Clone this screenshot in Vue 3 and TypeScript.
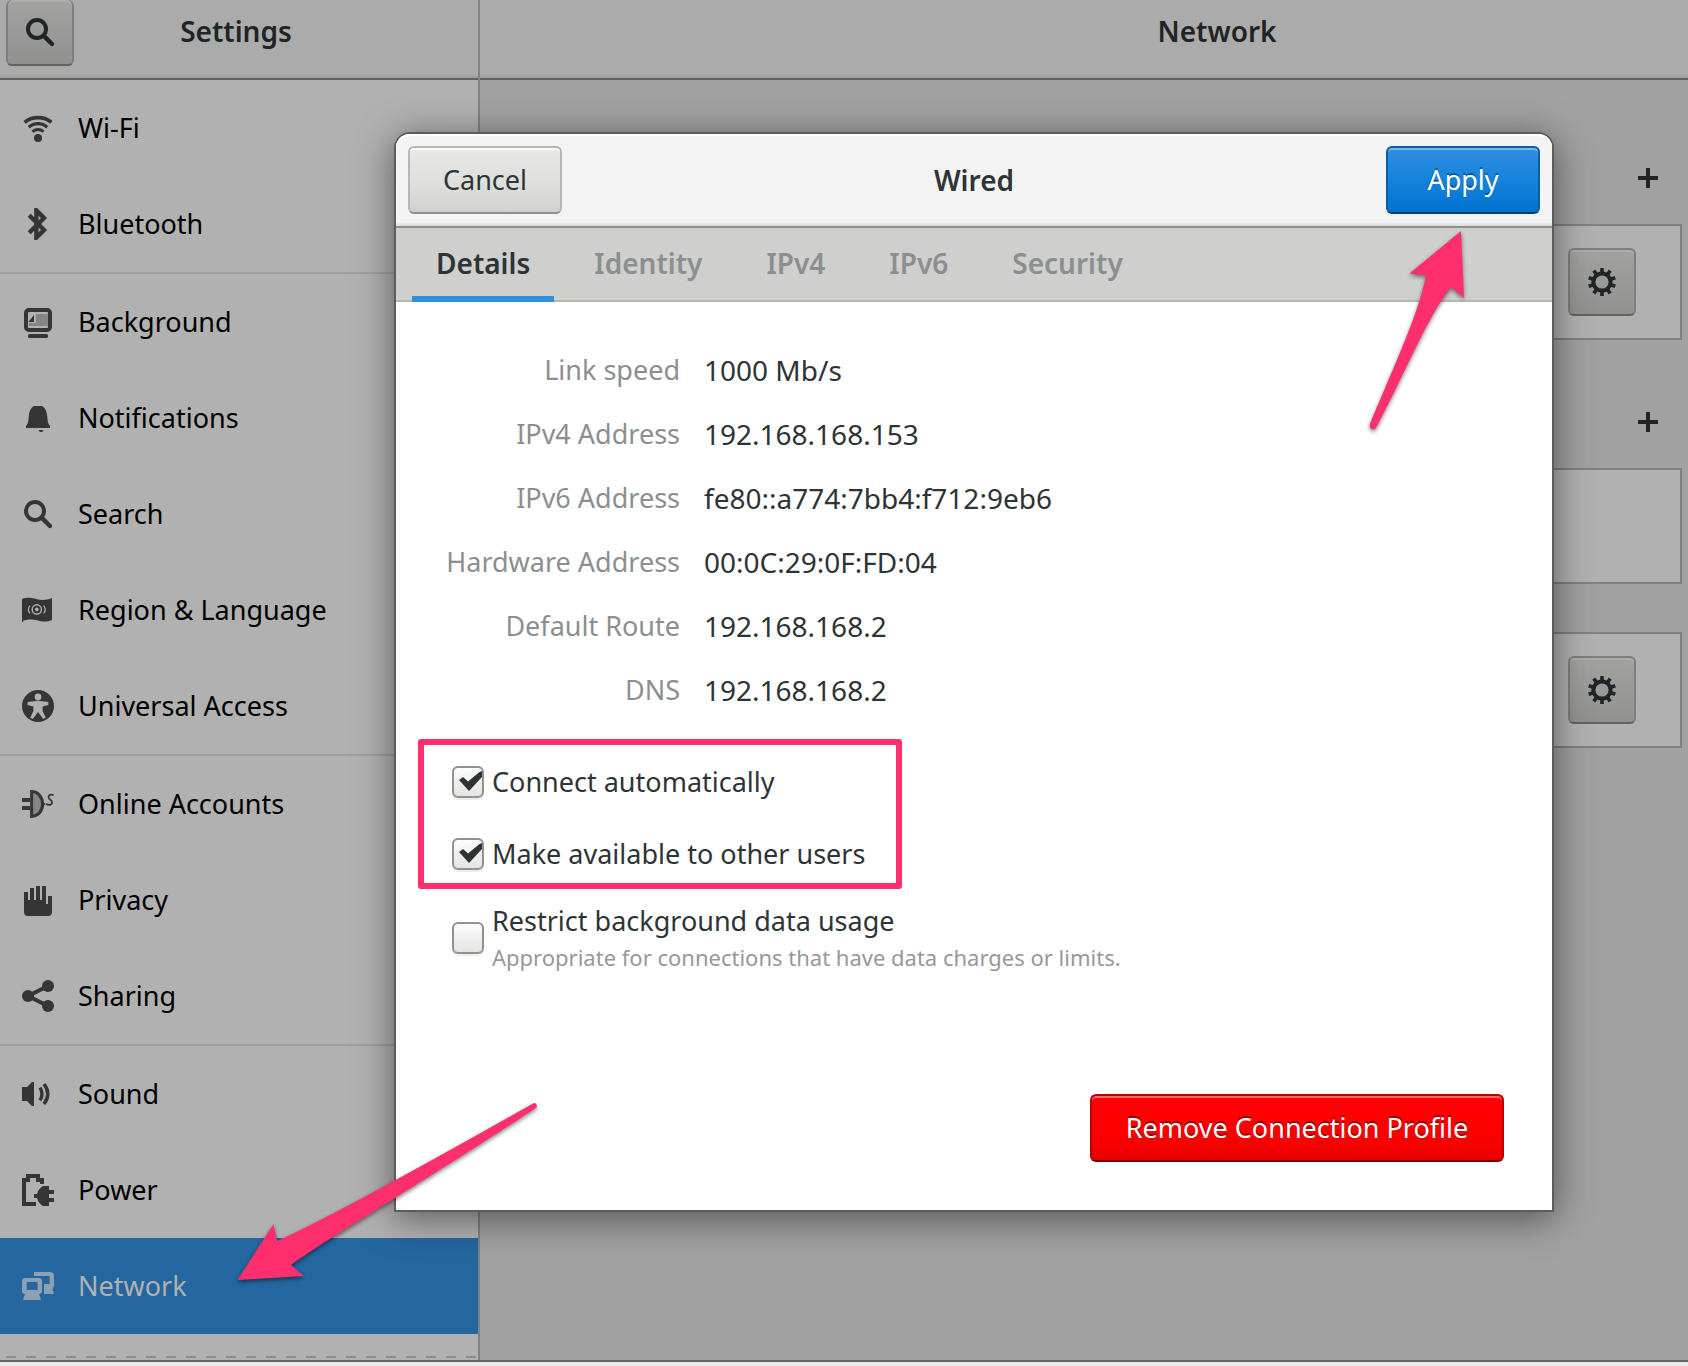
<script setup lang="ts">
import { ref } from 'vue'

interface Item {
  id: string
  label: string
}

const groups: Item[][] = [
  [
    { id: 'wifi', label: 'Wi-Fi' },
    { id: 'bluetooth', label: 'Bluetooth' },
  ],
  [
    { id: 'background', label: 'Background' },
    { id: 'bell', label: 'Notifications' },
    { id: 'search', label: 'Search' },
    { id: 'region', label: 'Region & Language' },
    { id: 'access', label: 'Universal Access' },
  ],
  [
    { id: 'online', label: 'Online Accounts' },
    { id: 'privacy', label: 'Privacy' },
    { id: 'sharing', label: 'Sharing' },
  ],
  [
    { id: 'sound', label: 'Sound' },
    { id: 'power', label: 'Power' },
    { id: 'network', label: 'Network' },
  ],
]
const current = ref('network')

const tabs = ['Details', 'Identity', 'IPv4', 'IPv6', 'Security']
const activeTab = ref('Details')

const details = [
  { name: 'Link speed', value: '1000 Mb/s' },
  { name: 'IPv4 Address', value: '192.168.168.153' },
  { name: 'IPv6 Address', value: 'fe80::a774:7bb4:f712:9eb6' },
  { name: 'Hardware Address', value: '00:0C:29:0F:FD:04' },
  { name: 'Default Route', value: '192.168.168.2' },
  { name: 'DNS', value: '192.168.168.2' },
]

const options = ref([
  { id: 'auto', label: 'Connect automatically', hint: '', checked: true },
  { id: 'shared', label: 'Make available to other users', hint: '', checked: true },
  {
    id: 'metered',
    label: 'Restrict background data usage',
    hint: 'Appropriate for connections that have data charges or limits.',
    checked: false,
  },
])

const cards = [
  { id: 'wired', add: true, gear: true },
  { id: 'vpn', add: true, gear: false },
  { id: 'proxy', add: false, gear: true },
]

const teeth = [0, 36, 72, 108, 144, 180, 216, 252, 288, 324]
</script>

<template>
  <div class="window">
    <aside class="sidebar">
      <header class="bar side-bar">
        <button class="btn dim search" type="button" aria-label="Search">
          <svg class="icon" viewBox="0 0 16 16" fill="none" stroke="currentColor" stroke-width="2">
            <circle cx="6.5" cy="6.5" r="4.5" />
            <path d="M9.8 9.8 14 14" stroke-width="2.2" stroke-linecap="round" />
          </svg>
        </button>
        <h1>Settings</h1>
      </header>
      <nav>
        <ul v-for="(group, g) in groups" :key="g">
          <li v-for="item in group" :key="item.id">
            <a href="#" :class="{ selected: item.id === current }" @click.prevent="current = item.id">
              <svg class="icon" viewBox="0 0 16 16" fill="currentColor" aria-hidden="true">
                <g v-if="item.id === 'wifi'">
                  <g fill="none" stroke="currentColor">
                    <path d="M1.3 5.2C4.8 2 11.2 2 14.7 5.2" stroke-width="1.8" />
                    <path d="M3.4 7.600C6 5.200 10 5.200 12.600 7.600" stroke-width="1.6" />
                    <path d="M5.2 9.800C7 8.500 9 8.500 10.800 9.800" stroke-width="1.5" />
                  </g>
                  <circle cx="8" cy="13" r="2" />
                </g>
                <path v-else-if="item.id === 'bluetooth'" d="M3.600 3.600 11 11 7.200 14.800V1.200L11 5 3.600 12.400" fill="none" stroke="currentColor" stroke-width="2.2" />
                <g v-else-if="item.id === 'background'">
                  <rect x="2" y="2" width="12" height="10" rx="1.4" fill="none" stroke="currentColor" stroke-width="2" />
                  <path d="M7 4h6v6H3.500V8.500H7z" fill="#858585" />
                  <path d="M6 4.500V8H3.200z" />
                  <rect x="3" y="14" width="10" height="2" rx=".8" />
                </g>
                <g v-else-if="item.id === 'bell'">
                  <path d="M6 2h4c2 1 2.500 3.500 2.700 6 .1 2 .5 3 1.300 4v1H2v-1c.8-1 1.200-2 1.300-4C3.500 5.500 4 3 6 2z" />
                  <path d="M8.300 14h2.400l-.6 1H8.900z" />
                </g>
                <g v-else-if="item.id === 'search'" fill="none" stroke="currentColor" stroke-width="2">
                  <circle cx="6.5" cy="6.5" r="4.5" />
                  <path d="M9.800 9.800 14 14" stroke-width="2.2" stroke-linecap="round" />
                </g>
                <g v-else-if="item.id === 'region'">
                  <path d="M0 2.500C3 1.500 5 2 7.500 2.600 10 3.200 12 3.200 15 2v11c-3 1.200-5 .8-7.500.1C5 12.400 3 12.700.6 13.300V14H0z" />
                  <circle cx="7.4" cy="7.700" r="2.300" fill="none" stroke="#b1b1b1" stroke-width=".7" />
                  <circle cx="7.400" cy="7.700" r=".9" fill="#b1b1b1" />
                  <path d="M4 5.800C3 7 3 8.500 4 9.700M10.800 5.800c1 1.200 1 2.700 0 3.900" fill="none" stroke="#b1b1b1" stroke-width=".6" />
                </g>
                <g v-else-if="item.id === 'access'">
                  <circle cx="8" cy="8" r="8" />
                  <circle cx="8" cy="3.500" r="1.700" fill="#b1b1b1" />
                  <path d="M2.800 6 7 5.500h2l4.200.5v1.500L10.300 8.200v2.300l1.600 3.400-1.300.6L8 11l-2.600 3.500-1.300-.6 1.600-3.400V8.200L2.800 7.500z" fill="#b1b1b1" />
                </g>
                <g v-else-if="item.id === 'online'">
                  <path d="M0 5h4v2H0zM0 9h4v2H0z" />
                  <path d="M4.800 1.800C8 1.800 10.300 4.500 10.300 8S8 14.200 4.800 14.200z" fill="#858585" stroke="currentColor" stroke-width="1.500" />
                  <path d="M10.500 8h1M15.800 3.600c-1.600-.6-2.800 0-2.500 1.200.2 1 1.700 1 1.700 2.300 0 1.500-1.600 1.700-3 .9" fill="none" stroke="currentColor" stroke-width=".9" />
                </g>
                <path v-else-if="item.id === 'privacy'" d="M1 4h2v4h1V2h2v6h1V1h2v7h1V1h2v9h1V6h2v8q0 2-2 2H3q-2 0-2-2z" />
                <g v-else-if="item.id === 'sharing'">
                  <circle cx="3" cy="8" r="3" />
                  <circle cx="13" cy="3" r="3" />
                  <circle cx="13" cy="13" r="3" />
                  <path d="M13 3 3 8l10 5" fill="none" stroke="currentColor" stroke-width="2" />
                </g>
                <g v-else-if="item.id === 'sound'">
                  <path d="M0 4.500h2.500L5 2h1v12H5l-2.500-2.500H0z" />
                  <path d="M9 4.800q2 3.200 0 6.400M11 3q3.800 5 0 10" fill="none" stroke="currentColor" stroke-width="1.700" />
                </g>
                <g v-else-if="item.id === 'power'">
                  <path d="M7 15H1V3h2V1h5v2h2v2" fill="none" stroke="currentColor" stroke-width="2" />
                  <path d="M6 10h1.500c.5-2 1.500-3 3-4H13.500v2H16v2h-2.500v2H16v2h-2.500v2h-3c-1.500-1-2.500-2-3-4H6z" />
                </g>
                <g v-else>
                  <path d="M1.500 4h7q1.500 0 1.500 1.500v5q0 1.500-1.500 1.500l.8 2v1H.7v-1l.8-2Q0 12 0 10.500v-5Q0 4 1.500 4zM2.300 6v4h5.500V6z" fill-rule="evenodd" />
                  <path d="M6 3V1h8q2 0 2 2v5l-.8 2 .6 1v1H11V7h2.800V3z" />
                </g>
              </svg>
              <span>{{ item.label }}</span>
            </a>
          </li>
        </ul>
      </nav>
      <div class="drop-edge"></div>
    </aside>

    <main class="panel">
      <header class="bar panel-bar"><h1>Network</h1></header>
      <div class="sections">
        <section v-for="card in cards" :key="card.id">
          <div v-if="card.add" class="head">
            <button class="add" type="button" aria-label="Add">
              <svg viewBox="0 0 20 20" width="20" height="20"><path d="M8 0h4v8h8v4h-8v8H8v-8H0V8h8z" fill="currentColor" /></svg>
            </button>
          </div>
          <div class="card">
            <button v-if="card.gear" class="btn dim gear" type="button" aria-label="Options">
              <svg class="icon" viewBox="-8 -8 16 16">
                <circle r="4.300" fill="none" stroke="currentColor" stroke-width="2" />
                <rect v-for="t in teeth" :key="t" x="-.9" y="-7" width="1.800" height="2.500" fill="currentColor" :transform="`rotate(${t})`" />
              </svg>
            </button>
          </div>
        </section>
      </div>
    </main>

    <div class="dialog" role="dialog" aria-label="Wired">
      <header class="dialog-bar">
        <button class="btn wide" type="button">Cancel</button>
        <h2>Wired</h2>
        <button class="btn wide apply" type="button">Apply</button>
      </header>
      <div class="tabs" role="tablist">
        <button
          v-for="tab in tabs"
          :key="tab"
          type="button"
          role="tab"
          :aria-selected="tab === activeTab"
          :class="{ active: tab === activeTab }"
          @click="activeTab = tab"
        >{{ tab }}</button>
      </div>
      <div class="body">
        <dl>
          <template v-for="row in details" :key="row.name">
            <dt>{{ row.name }}</dt>
            <dd>{{ row.value }}</dd>
          </template>
        </dl>
        <div class="options">
          <label v-for="option in options" :key="option.id" :for="option.id">
            <span class="check">
              <input :id="option.id" v-model="option.checked" type="checkbox" />
              <svg v-if="option.checked" viewBox="0 0 32 32" aria-hidden="true">
                <path d="M7 14l4-3 5 4.500L27.500 6 30 5v6L17 25z" fill="#2e3436" />
              </svg>
            </span>
            <span class="caption">
              <span>{{ option.label }}</span>
              <small v-if="option.hint">{{ option.hint }}</small>
            </span>
          </label>
        </div>
        <div class="actions">
          <button class="btn remove" type="button">Remove Connection Profile</button>
        </div>
      </div>
      <div class="marker"></div>
      <svg class="arrow arrow-apply" viewBox="0 0 100 204" width="100" height="204" aria-hidden="true">
        <path d="M93 3 41.500 45.500 58 47.500C51 82 36 116 2 196Q1 201 5 201.500 7 201.500 8.500 199C44 131 58 92 83 59L96 70z" />
      </svg>
    </div>

    <svg class="arrow arrow-network" viewBox="0 0 304 184" width="304" height="184" aria-hidden="true">
      <path d="M1.500 180 37.500 124 41 141Q100 115 297 3.500 300 2 301 6 301 7.500 299 8.500C180 87 108 128 55 165L67.500 176z" />
    </svg>
  </div>
</template>

<style>
body {
  margin: 0;
  background: #ebebeb;
}
</style>

<style scoped>
* {
  box-sizing: border-box;
}
.window {
  position: relative;
  display: flex;
  border-bottom: 2px solid #666;
  margin-bottom: 4px;
  background: #a1a1a1;
  color: #1f2526;
  font: 27px/36px "Noto Sans", "Open Sans", sans-serif;
  overflow: hidden;
}
button {
  font: inherit;
  color: inherit;
  padding: 0;
}
h1,
h2 {
  margin: 0;
  font-size: 28px;
  font-weight: 600;
  text-align: center;
}
.icon {
  display: block;
  flex: none;
  width: 32px;
  height: 32px;
}

.sidebar {
  flex: none;
  width: 480px;
  border-right: 2px solid #828282;
  background: #b1b1b1;
}
.bar {
  height: 80px;
  border-bottom: 2px solid #62625d;
  background: linear-gradient(#ababab 74px, #9b9b9a);
}
.bar h1 {
  line-height: 62px;
}
.side-bar {
  display: grid;
  grid-template-columns: 68px 1fr 80px;
  padding-left: 6px;
  align-items: start;
}
.panel-bar {
  padding-left: 266px;
}
.btn {
  display: flex;
  align-items: center;
  justify-content: center;
  height: 68px;
  border: 2px solid #b6b6b3;
  border-bottom-color: #8f8f8a;
  border-radius: 6px;
  background: linear-gradient(#e8e8e7, #dededd 60%, #d0d0ce);
  box-shadow: inset 0 2px #fafafa;
}
.dim {
  width: 68px;
  border-color: #7f7f7d;
  border-bottom-color: #63635f;
  background: linear-gradient(#a2a29f, #989896 60%, #91918f);
  box-shadow: inset 0 2px #adadad;
}
.search {
  height: 66px;
  border-top: 0;
}
ul {
  margin: 0;
  padding: 0;
  list-style: none;
}
ul + ul {
  border-top: 2px solid #9f9f9f;
}
nav a {
  display: flex;
  align-items: center;
  gap: 24px;
  height: 96px;
  padding-left: 22px;
  color: #000;
  text-decoration: none;
}
nav .icon {
  color: #353535;
}
nav a.selected {
  background: #24669f;
  color: #b1b1b1;
}
nav .selected .icon {
  color: #8c9fb3;
}
.drop-edge {
  height: 26px;
  padding-top: 22px;
}
.drop-edge::before {
  content: "";
  display: block;
  height: 2px;
  margin-left: 6px;
  background: repeating-linear-gradient(90deg, #8e8e8e 0 10px, transparent 10px 20px);
}

.panel {
  flex: 1;
}
.sections {
  display: flex;
  flex-direction: column;
  gap: 48px;
  padding: 64px 6px 0 48px;
}
.head {
  display: flex;
  justify-content: flex-end;
  margin-bottom: 12px;
}
.add {
  display: flex;
  align-items: center;
  justify-content: center;
  width: 68px;
  height: 68px;
  border: 0;
  background: none;
}
.card {
  display: flex;
  align-items: center;
  justify-content: flex-end;
  height: 116px;
  padding-right: 44px;
  border: 2px solid #7f7f7f;
  background: #b1b1b1;
}

.dialog {
  position: absolute;
  top: 132px;
  left: 394px;
  right: 134px;
  border: 2px solid #5d5d5d;
  border-radius: 16px 16px 0 0;
  background: #fff;
  color: #2e3436;
  box-shadow: 0 6px 36px rgba(0, 0, 0, 0.5);
}
.dialog-bar {
  display: flex;
  align-items: center;
  justify-content: space-between;
  height: 94px;
  padding: 0 12px;
  border-bottom: 2px solid #8f8f8a;
  border-radius: 14px 14px 0 0;
  background: linear-gradient(#f3f3f3 88px, #dcdcda);
  box-shadow: inset 0 2px #fff;
}
.wide {
  width: 154px;
}
.apply {
  border-color: #0a5da8;
  border-bottom-color: #063e73;
  background: linear-gradient(#2f8fe0, #1583dc 50%, #0073d0);
  box-shadow: inset 0 2px #79b6ec;
  color: #fff;
  text-shadow: 0 -2px rgba(0, 0, 0, 0.35);
}
.tabs {
  display: flex;
  gap: 16px;
  height: 74px;
  padding: 0 16px;
  background: linear-gradient(#cfcfcd 72px, #b6b6b3 72px);
}
.tabs button {
  padding: 2px 24px 0;
  border: 0;
  border-bottom: 6px solid transparent;
  background: none;
  color: #8b8f8f;
  font-size: 28px;
  font-weight: 600;
}
.tabs .active {
  border-color: #2f8fe0;
  color: #2e3436;
}
.body {
  padding: 36px 48px 48px 0;
}
dl {
  display: grid;
  grid-template-columns: 284px 1fr;
  grid-auto-rows: 64px;
  column-gap: 24px;
  align-items: center;
  margin: 0 0 24px;
}
dt {
  color: #8b8f8f;
  text-align: right;
}
dd {
  margin: 0;
  font-size: 28px;
}
.options {
  padding-left: 56px;
}
label {
  display: flex;
  align-items: center;
  gap: 8px;
  width: fit-content;
  height: 72px;
}
label:last-child {
  margin-top: 12px;
}
.check {
  position: relative;
  width: 32px;
  height: 32px;
}
.check input {
  display: block;
  appearance: none;
  width: 32px;
  height: 32px;
  margin: 0;
  border: 2px solid #92928d;
  border-radius: 6px;
  background: linear-gradient(#fcfcfc, #e4e4e3);
  box-shadow: 0 2px rgba(0, 0, 0, 0.07);
}
.check svg {
  position: absolute;
  inset: 0;
  pointer-events: none;
}
.caption {
  display: flex;
  flex-direction: column;
}
label:last-child .caption {
  padding-top: 2px;
}
small {
  color: #959998;
  font-size: 22px;
}
.actions {
  display: flex;
  justify-content: flex-end;
  margin-top: 120px;
}
.remove {
  width: 414px;
  border-color: #b80000;
  border-bottom-color: #7c0000;
  background: linear-gradient(#ff000c, #f00 30%, #f80000 75%, #e60000);
  box-shadow: inset 0 2px #ff6666;
  color: #fff;
  text-shadow: 0 -2px rgba(0, 0, 0, 0.4);
}

.marker {
  position: absolute;
  left: 22px;
  top: 605px;
  width: 484px;
  height: 150px;
  border: 6px solid #ff2f6d;
  border-radius: 3px;
  pointer-events: none;
}
.arrow {
  position: absolute;
  overflow: visible;
  fill: #ff2f6d;
  filter: drop-shadow(0 2px 2px rgba(0, 0, 0, 0.5));
  pointer-events: none;
}
.arrow-apply {
  top: 94px;
  right: 84px;
}
.arrow-network {
  left: 236px;
  top: 1100px;
}
</style>
